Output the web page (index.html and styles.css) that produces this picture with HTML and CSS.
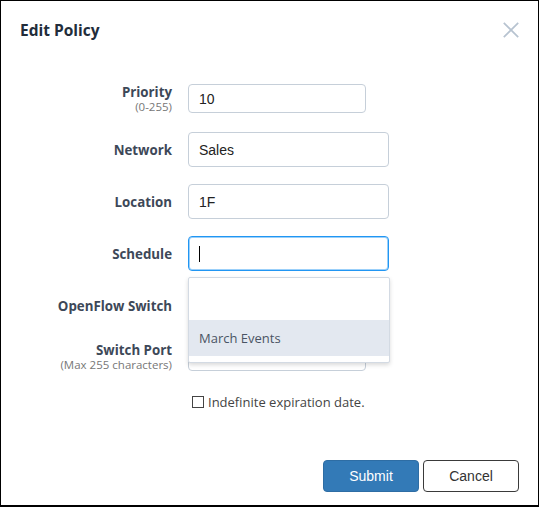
FILE: index.html
```html
<!DOCTYPE html>
<html lang="en">
<head>
<meta charset="utf-8">
<title>Edit Policy</title>
<link rel="stylesheet" href="styles.css">
</head>
<body>
<div class="dialog">
  <header class="head">
    <h1 class="title">Edit Policy</h1>
    <button class="close" type="button" aria-label="Close">
      <svg width="16" height="16" viewBox="0 0 16 16"><path d="M0.8 0.8 L15.2 15.2 M15.2 0.8 L0.8 15.2" stroke="#b7c3d0" stroke-width="1.7" fill="none"/></svg>
    </button>
  </header>
  <form class="form">
    <div class="row row-top row-priority">
      <label class="label"><span class="name">Priority</span><span class="hint">(0-255)</span></label>
      <input class="field field-short" type="text" value="10">
    </div>
    <div class="row row-mid">
      <label class="label"><span class="name">Network</span></label>
      <input class="field" type="text" value="Sales">
    </div>
    <div class="row row-mid">
      <label class="label"><span class="name">Location</span></label>
      <input class="field" type="text" value="1F">
    </div>
    <div class="row row-mid">
      <label class="label"><span class="name">Schedule</span></label>
      <div class="combo">
        <div class="field field-focus"><span class="caret"></span></div>
        <ul class="menu">
          <li class="option"></li>
          <li class="option option-active">March Events</li>
        </ul>
      </div>
    </div>
    <div class="row row-mid row-switch">
      <label class="label"><span class="name">OpenFlow Switch</span></label>
      <input class="field" type="text" value="">
    </div>
    <div class="row row-top row-port">
      <label class="label"><span class="name">Switch Port</span><span class="hint">(Max 255 characters)</span></label>
      <input class="field field-short" type="text" value="">
    </div>
    <div class="check-row">
      <label class="check"><span class="box"></span>Indefinite expiration date.</label>
    </div>
  </form>
  <footer class="actions">
    <button class="btn btn-primary" type="button">Submit</button>
    <button class="btn btn-default" type="button">Cancel</button>
  </footer>
</div>
</body>
</html>
```

FILE: styles.css
```css
* { box-sizing: border-box; }
html, body { margin: 0; padding: 0; background: #fff; }
.dialog {
  width: 539px;
  height: 507px;
  border: 1px solid #000;
  border-bottom-width: 2px;
  display: flex;
  flex-direction: column;
  font-family: "Open Sans", "Liberation Sans", sans-serif;
  background: #fff;
}
.head {
  display: flex;
  align-items: center;
  justify-content: space-between;
  padding: 18px 19px 0 19px;
  height: 40px;
}
.title {
  margin: 0;
  font-size: 15.5px;
  line-height: 22px;
  font-weight: 700;
  color: #222d3b;
}
.close {
  border: 0;
  background: none;
  padding: 0;
  width: 16px;
  height: 16px;
  display: block;
}
.close svg { display: block; }
.form {
  display: flex;
  flex-direction: column;
  padding-top: 43px;
}
.row {
  display: grid;
  grid-template-columns: 171px auto;
  column-gap: 16px;
}
.row-mid { align-items: center; height: 35px; margin-bottom: 17px; }
.row-top { align-items: start; }
.row-priority { margin-bottom: 18px; }
.row-switch { margin-bottom: 19px; }
.row-port { margin-bottom: 22px; }
.label {
  display: flex;
  flex-direction: column;
  align-items: flex-end;
  text-align: right;
  color: #3d4858;
}
.name {
  font-size: 13.3px;
  font-weight: 700;
  line-height: 16px;
}
.hint {
  font-size: 11.5px;
  line-height: 14px;
  color: #777;
}
.field {
  width: 201px;
  height: 35px;
  border: 1px solid #c6cfd9;
  border-radius: 4px;
  padding: 0 10px;
  font-family: "Liberation Sans", Arial, sans-serif;
  font-size: 14px;
  color: #222;
  background: #fff;
  outline: none;
}
.field-short { width: 178px; height: 29px; }
.combo { position: relative; }
.field-focus {
  border-color: #2196f3;
  box-shadow: inset 0 0 0 1px rgba(33, 150, 243, 0.45);
  display: flex;
  align-items: center;
}
.caret {
  display: block;
  width: 1px;
  height: 16px;
  background: #000;
}
.menu {
  position: absolute;
  left: 0;
  top: 41px;
  width: 202px;
  margin: 0;
  padding: 6px 0;
  list-style: none;
  background: #fff;
  border: 1px solid #d3dae3;
  border-radius: 2px;
  box-shadow: 0 2px 4px rgba(0, 0, 0, 0.15);
  z-index: 5;
}
.option {
  height: 36px;
  padding: 0 10px;
  display: flex;
  align-items: center;
  font-size: 13px;
  color: #4a5464;
}
.option-active { background: #e3e8f0; }
.check-row { padding-left: 191px; }
.check {
  display: flex;
  align-items: center;
  font-size: 13px;
  line-height: 16px;
  color: #444;
}
.box {
  width: 12px;
  height: 12px;
  border: 1px solid #444;
  margin-right: 4px;
  background: #fff;
}
.actions {
  margin-top: auto;
  display: flex;
  justify-content: flex-end;
  gap: 4px;
  padding: 0 19px 13px 0;
}
.btn {
  width: 96px;
  height: 32px;
  border-radius: 4px;
  font-family: "Liberation Sans", Arial, sans-serif;
  font-size: 14px;
  padding: 0;
}
.btn-primary {
  background: #337ab7;
  border: 1px solid #2e6da4;
  color: #fff;
}
.btn-default {
  background: #fff;
  border: 1px solid #3a3a3a;
  color: #333;
}
```
